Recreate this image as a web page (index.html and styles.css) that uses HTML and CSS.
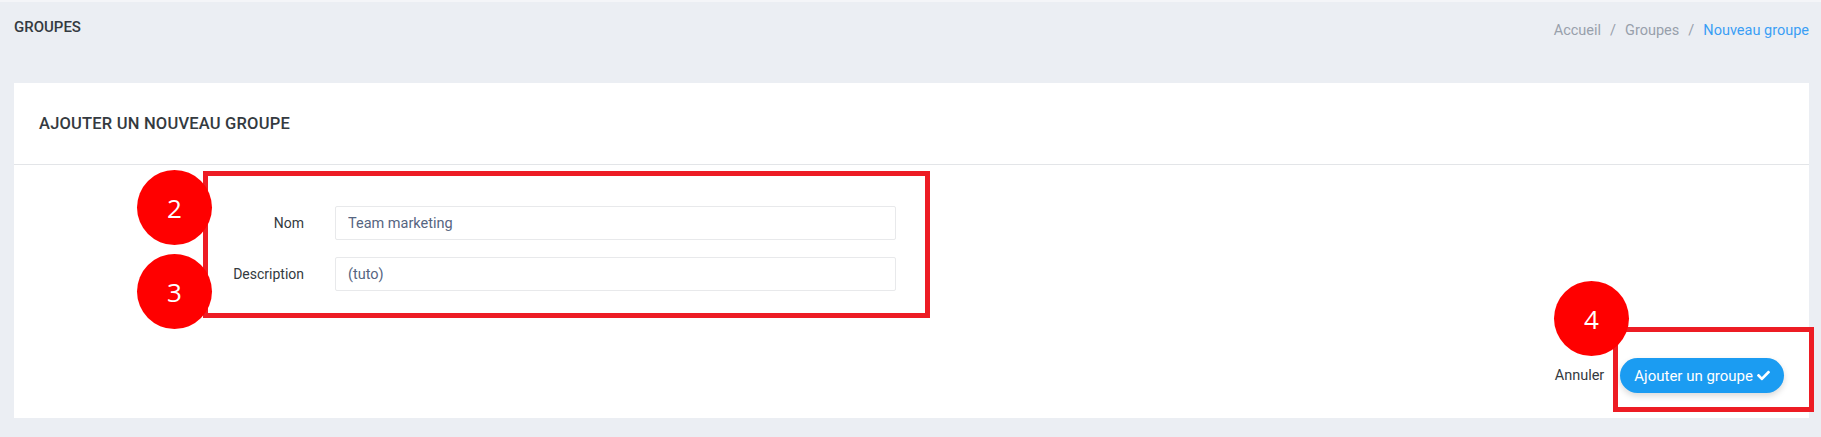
FILE: index.html
```html
<!DOCTYPE html>
<html lang="fr">
<head>
    <meta charset="UTF-8">
    <title>Nouveau groupe</title>
    <link rel="stylesheet" href="styles.css">
</head>
<body>
    <div class="page-header">
        <h4 class="page-title">GROUPES</h4>
        <ol class="breadcrumb">
            <li><a href="#">Accueil</a></li>
            <li class="sep">/</li>
            <li><a href="#">Groupes</a></li>
            <li class="sep">/</li>
            <li class="active">Nouveau groupe</li>
        </ol>
    </div>

    <div class="card">
        <div class="card-header">
            <h5 class="card-title">AJOUTER UN NOUVEAU GROUPE</h5>
        </div>
        <div class="card-body">
            <form class="form">
                <div class="form-row">
                    <label for="nom">Nom</label>
                    <input id="nom" type="text" value="Team marketing">
                </div>
                <div class="form-row">
                    <label for="description">Description</label>
                    <input id="description" type="text" value="(tuto)">
                </div>
            </form>
            <div class="form-actions">
                <a href="#" class="btn-link">Annuler</a>
                <button type="button" class="btn-primary">
                    Ajouter un groupe
                    <svg class="icon-check" viewBox="0 0 512 512" width="13" height="13"><path fill="currentColor" d="M173.9 439.4l-166.4-166.4c-10-10-10-26.2 0-36.2l36.2-36.2c10-10 26.2-10 36.2 0L192 312.7 432.1 72.6c10-10 26.2-10 36.2 0l36.2 36.2c10 10 10 26.2 0 36.2l-294.4 294.4c-10 10-26.2 10-36.2 0z"/></svg>
                </button>
            </div>
        </div>

        <!-- tutorial annotations -->
        <div class="mark mark-fields"></div>
        <div class="mark mark-submit"></div>
        <span class="step step-2">2</span>
        <span class="step step-3">3</span>
        <span class="step step-4">4</span>
    </div>
</body>
</html>
```

FILE: styles.css
```css
/* Page layout */
body {
    font-family: Roboto, "Liberation Sans", sans-serif;
    background-color: #ebeef3;
    color: #343a40;
    margin: 0;
    padding: 0;
    border-top: 2px solid #f4f5f8;
}
.page-header {
    display: flex;
    justify-content: space-between;
    align-items: flex-start;
    padding: 16px 12px 0 14px;
    height: 65px;
}
.page-title {
    margin: 0;
    font-size: 15px;
    font-weight: 500;
    color: #343a40;
}
.breadcrumb {
    display: flex;
    gap: 9px;
    list-style: none;
    margin: 4px 0 0;
    padding: 0;
    font-size: 14.5px;
    color: #98a0ab;
}
.breadcrumb a {
    color: #98a0ab;
    text-decoration: none;
}
.breadcrumb .active {
    color: #3a9ef5;
}

/* Card */
.card {
    position: relative;
    margin: 0 12px 18px 14px;
    background-color: white;
}
.card-header {
    height: 81px;
    display: flex;
    align-items: center;
    padding: 0 25px;
    border-bottom: 1px solid #e3e5e8;
}
.card-title {
    margin: 0;
    font-size: 16.5px;
    font-weight: 500;
    color: #343a40;
    letter-spacing: 0.2px;
}
.card-body {
    padding: 41px 25px 25px 0;
}

/* Form */
.form-row {
    display: grid;
    grid-template-columns: 290px 561px;
    column-gap: 31px;
    align-items: center;
    margin-bottom: 17px;
}
.form-row label {
    text-align: right;
    font-size: 14px;
    color: #343a40;
}
.form-row input {
    height: 34px;
    box-sizing: border-box;
    border: 1px solid #e8e9eb;
    border-radius: 2px;
    padding: 0 12px;
    font-family: inherit;
    font-size: 14.5px;
    color: #566581;
}
.form-actions {
    display: flex;
    justify-content: flex-end;
    align-items: center;
    gap: 16px;
    margin-top: 67px;
}
.btn-link {
    font-size: 14.5px;
    color: #343a40;
    text-decoration: none;
}
.btn-primary {
    display: flex;
    align-items: center;
    gap: 4px;
    height: 35px;
    padding: 0 14px;
    border: none;
    border-radius: 18px;
    background-color: #1b9cf2;
    color: white;
    font-family: inherit;
    font-size: 15px;
    box-shadow: 0 3px 6px rgba(0, 0, 0, 0.15);
}

/* Tutorial annotations over the card */
.mark {
    position: absolute;
    border: 5px solid #ed1c24;
    box-sizing: border-box;
}
.mark-fields {
    left: 189px;
    top: 88px;
    width: 727px;
    height: 147px;
}
.mark-submit {
    right: -5px;
    top: 244px;
    width: 201px;
    height: 85px;
}
.step {
    position: absolute;
    width: 75px;
    height: 75px;
    border-radius: 50%;
    background-color: #ff0000;
    color: white;
    font-family: "Open Sans", sans-serif;
    font-size: 26px;
    display: flex;
    align-items: center;
    justify-content: center;
}
.step-2 { left: 123px; top: 87px; }
.step-3 { left: 123px; top: 171px; }
.step-4 { right: 180px; top: 198px; }
```
